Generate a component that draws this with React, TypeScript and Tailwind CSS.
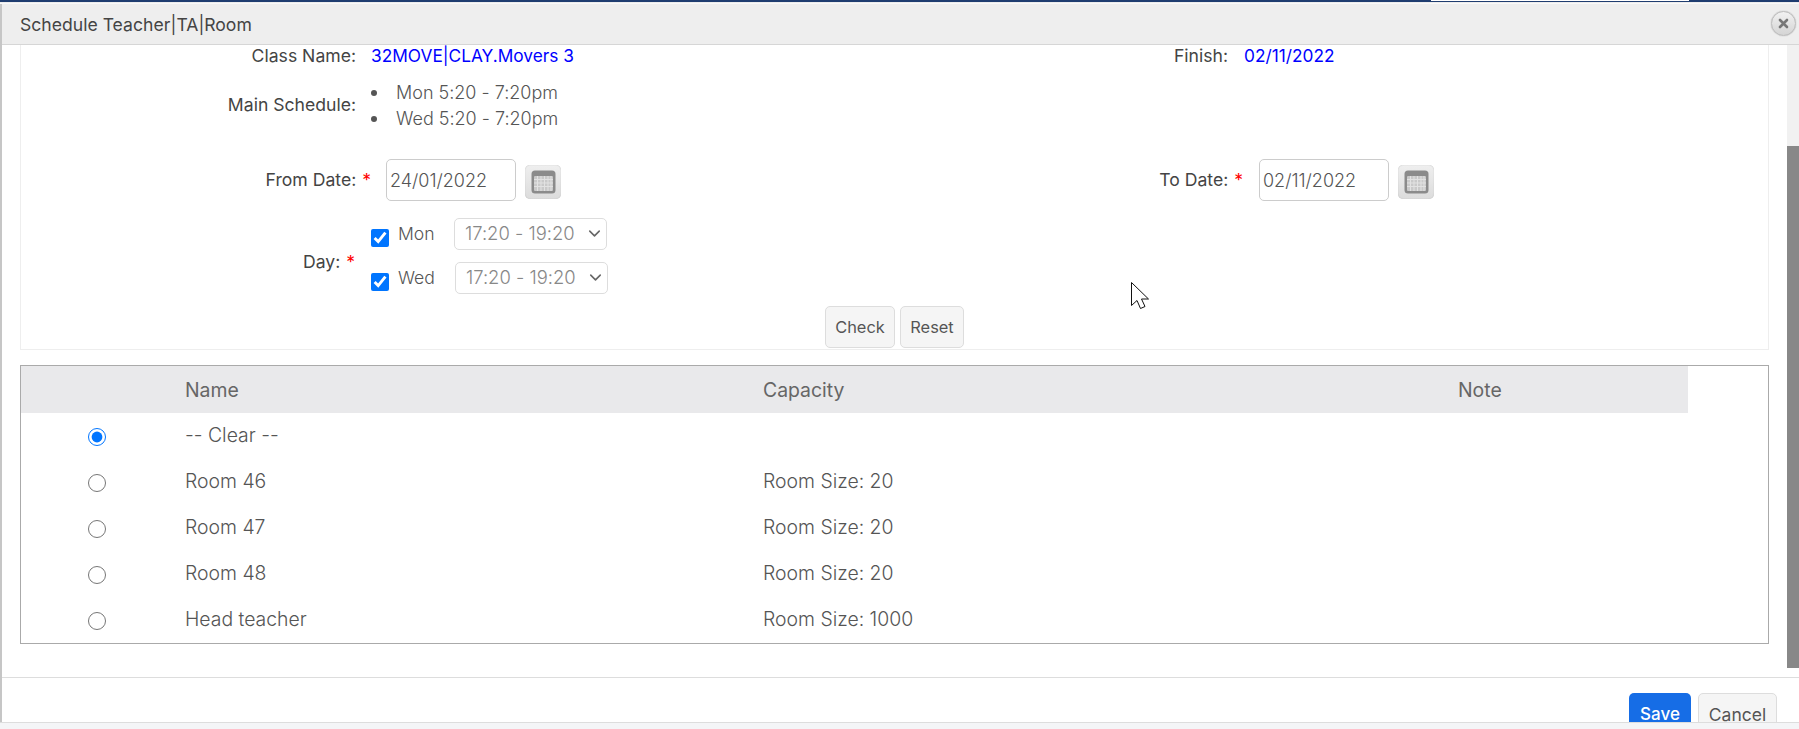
import { ChevronDown } from 'lucide-react'

const rooms = [
  { name: '-- Clear --', capacity: '', checked: true },
  { name: 'Room 46', capacity: 'Room Size: 20' },
  { name: 'Room 47', capacity: 'Room Size: 20' },
  { name: 'Room 48', capacity: 'Room Size: 20' },
  { name: 'Head teacher', capacity: 'Room Size: 1000' },
]

function CalendarButton() {
  return (
    <button
      type="button"
      className="ml-[9px] mt-[6px] flex h-[34px] w-[36px] shrink-0 items-center justify-center rounded-[5px] bg-gradient-to-b from-[#efefef] to-[#dcdcdc] shadow-[inset_0_0_1px_#aaa]"
    >
      <svg width="25" height="24" viewBox="0 0 25 24">
        <rect x="0.5" y="0.5" width="24" height="23" rx="3.5" fill="#8b8b8b" />
        <rect x="3" y="6" width="19" height="15" rx="1" fill="#c9c9c9" />
        <path d="M6.5 6v15M10 6v15M13.5 6v15M17 6v15M20 6v15M3 9.5h19M3 13h19M3 16.5h19" stroke="#e2e2e2" strokeWidth="1" />
      </svg>
    </button>
  )
}

function Required({ children }: { children: string }) {
  return (
    <span>
      {children} <span className="ml-[1px] text-[#f00]">*</span>
    </span>
  )
}

function DateField({ value, width }: { value: string; width: string }) {
  return (
    <input
      readOnly
      value={value}
      className={`h-[42px] shrink-0 rounded-[5px] border border-[#ccc] bg-white pl-[3px] text-[18px] font-light text-[#555] outline-none ${width}`}
    />
  )
}

function DayRow({ day, labelWidth }: { day: string; labelWidth: string }) {
  return (
    <div className="flex h-[32px] items-center">
      <input type="checkbox" defaultChecked className="mt-[8px] h-[18px] w-[18px] accent-[#0075ff]" />
      <span className={`ml-[9px] text-[17.6px] font-light text-[#555] ${labelWidth}`}>{day}</span>
      <div className="relative">
        <select
          disabled
          className="h-[32px] w-[153px] appearance-none rounded-[5px] border border-[#ddd] bg-white pl-[10px] text-[18.4px] font-light text-[#888] opacity-100"
        >
          <option>17:20 - 19:20</option>
        </select>
        <ChevronDown size={19} strokeWidth={2} className="absolute right-[3px] top-[6px] text-[#666]" />
      </div>
    </div>
  )
}

export default function App() {
  return (
    <div className="relative flex h-[729px] flex-col overflow-hidden bg-[#f4f5f7] font-['Inter',sans-serif] text-[#555] [font-variant-ligatures:none] [font-feature-settings:'calt'_0]">
      <div className="flex h-[2px] shrink-0 bg-[#1f3d70]">
        <div className="ml-[1431px] h-[1px] w-[258px] bg-white" />
      </div>
      <div className="h-[2px] shrink-0 bg-gradient-to-b from-[#e6e6e6] to-white" />

      <div className="flex h-[718px] shrink-0">
        <div className="w-[2px] bg-[#c6c6c6]" />
        <div className="flex min-w-0 flex-1 flex-col bg-white">
          <div className="flex h-[41px] shrink-0 items-center justify-between border-b border-[#d6d6d6] bg-[#eeeeee] pl-[18px] pr-[3px]">
            <span className="mt-[3px] text-[17.6px] font-normal text-[#444]">Schedule Teacher|TA|Room</span>
            <div className="mt-[-2px] flex h-[25px] w-[25px] items-center justify-center rounded-full border border-[#bbb] bg-gradient-to-b from-[#f2f2f2] to-[#d4d4d4] shadow-[0_0_1px_#999]">
              <svg width="11" height="11" viewBox="0 0 11 11">
                <path d="M2 2l7 7M9 2l-7 7" stroke="#777" strokeWidth="2.6" strokeLinecap="round" />
              </svg>
            </div>
          </div>

          <div className="flex h-[632px] shrink-0 overflow-hidden">
            <div className="min-w-0 flex-1 pl-[18px] pr-[18px]">
              <div className="border-x border-b border-[#eeeeee] pb-[1px]">
                <div className="grid grid-cols-[870px_1fr] text-[17.6px] text-[#444]">
                  <div>
                    <div className="flex h-[21px] items-center leading-[20px]">
                      <div className="w-[335px] text-right">Class Name:</div>
                      <div className="ml-[15px] text-[17.3px] text-[#0000ff]">32MOVE|CLAY.Movers 3</div>
                    </div>
                    <div className="mt-[14px] flex h-[52px] items-center">
                      <div className="mt-[-2px] w-[335px] text-right">Main Schedule:</div>
                      <ul className="ml-[15px] text-[18px] font-light leading-[26px] text-[#555]">
                        <li className="flex items-center gap-[19px]">
                          <span className="h-[6px] w-[6px] rounded-full bg-[#555]" />
                          Mon 5:20 - 7:20pm
                        </li>
                        <li className="flex items-center gap-[19px]">
                          <span className="h-[6px] w-[6px] rounded-full bg-[#555]" />
                          Wed 5:20 - 7:20pm
                        </li>
                      </ul>
                    </div>
                  </div>
                  <div className="flex h-[21px] items-center leading-[20px]">
                    <div className="w-[337px] text-right">Finish:</div>
                    <div className="ml-[16px] text-[17.3px] text-[#0000ff]">02/11/2022</div>
                  </div>
                </div>

                <div className="mt-[27px] grid grid-cols-[870px_1fr] text-[17.6px] text-[#444]">
                  <div className="flex items-start">
                    <div className="flex h-[42px] w-[350px] items-center justify-end">
                      <Required>From Date:</Required>
                    </div>
                    <div className="ml-[15px]">
                      <DateField value="24/01/2022" width="w-[130px]" />
                    </div>
                    <CalendarButton />
                  </div>
                  <div className="flex items-start">
                    <div className="flex h-[42px] w-[352px] items-center justify-end">
                      <Required>To Date:</Required>
                    </div>
                    <div className="ml-[16px]">
                      <DateField value="02/11/2022" width="w-[130px]" />
                    </div>
                    <CalendarButton />
                  </div>
                </div>

                <div className="mt-[17px] flex h-[76px] items-center text-[17.6px] text-[#444]">
                  <div className="mt-[12px] flex w-[334px] justify-end">
                    <Required>Day:</Required>
                  </div>
                  <div className="ml-[16px] flex flex-col gap-[12px]">
                    <DayRow day="Mon" labelWidth="w-[56px]" />
                    <DayRow day="Wed" labelWidth="w-[57px]" />
                  </div>
                </div>

                <div className="mt-[12px] flex justify-center gap-[5px]">
                  <button type="button" className="h-[42px] w-[70px] rounded-[5px] border border-[#ddd] bg-[#f5f5f5] text-[16.4px] text-[#555]">
                    Check
                  </button>
                  <button type="button" className="h-[42px] w-[64px] rounded-[5px] border border-[#ddd] bg-[#f5f5f5] text-[16.4px] text-[#555]">
                    Reset
                  </button>
                </div>
              </div>

              <div className="mt-[15px] border border-[#aaaaaa] pr-[80px]">
                <table className="w-full table-fixed border-collapse text-[19.4px] font-light text-[#555]">
                  <colgroup>
                    <col className="w-[151px]" />
                    <col className="w-[578px]" />
                    <col className="w-[695px]" />
                    <col />
                  </colgroup>
                  <thead>
                    <tr className="h-[47px] bg-[#e9e9eb] text-left text-[#666]">
                      <th />
                      <th className="pl-[13px] pt-[3px] font-normal">Name</th>
                      <th className="pl-[13px] pt-[3px] font-normal">Capacity</th>
                      <th className="pl-[13px] pt-[3px] font-normal">Note</th>
                    </tr>
                  </thead>
                  <tbody>
                    {rooms.map((room) => (
                      <tr key={room.name} className="h-[46px]">
                        <td className="pl-[1px] text-center">
                          <input
                            type="radio"
                            name="room"
                            defaultChecked={room.checked}
                            className="mt-[10px] h-[18px] w-[18px] accent-[#0075ff]"
                          />
                        </td>
                        <td className="pl-[13px]">{room.name}</td>
                        <td className="pl-[13px]">{room.capacity}</td>
                        <td />
                      </tr>
                    ))}
                  </tbody>
                </table>
              </div>
            </div>

            <div className="w-[12px] shrink-0">
              <div className="h-[101px] bg-[#f1f1f1]" />
              <div className="h-[522px] bg-[#888888]" />
            </div>
          </div>

          <div className="flex h-[45px] shrink-0 items-start justify-end gap-[7px] overflow-hidden border-t border-[#dddddd] pr-[22px] pt-[15px]">
            <button type="button" className="h-[42px] w-[62px] shrink-0 rounded-[5px] bg-[#166de6] pt-[2px] text-[17px] font-medium text-white">
              Save
            </button>
            <button type="button" className="h-[42px] w-[79px] shrink-0 rounded-[5px] border border-[#ddd] bg-[#f5f5f5] pt-[2px] text-[17.5px] text-[#555]">
              Cancel
            </button>
          </div>
        </div>
      </div>

      <div className="h-[7px] shrink-0 border-t border-[#dddddd] bg-[#f4f5f7]" />

      <svg className="absolute left-[1130px] top-[281px]" width="20" height="29" viewBox="0 0 20 29">
        <path d="M1.5 1.5v23l5.5-5 3.5 8 4.5-2-3.5-7.5h7z" fill="#fff" stroke="#111" strokeWidth="1" strokeLinejoin="miter" />
      </svg>
    </div>
  )
}
